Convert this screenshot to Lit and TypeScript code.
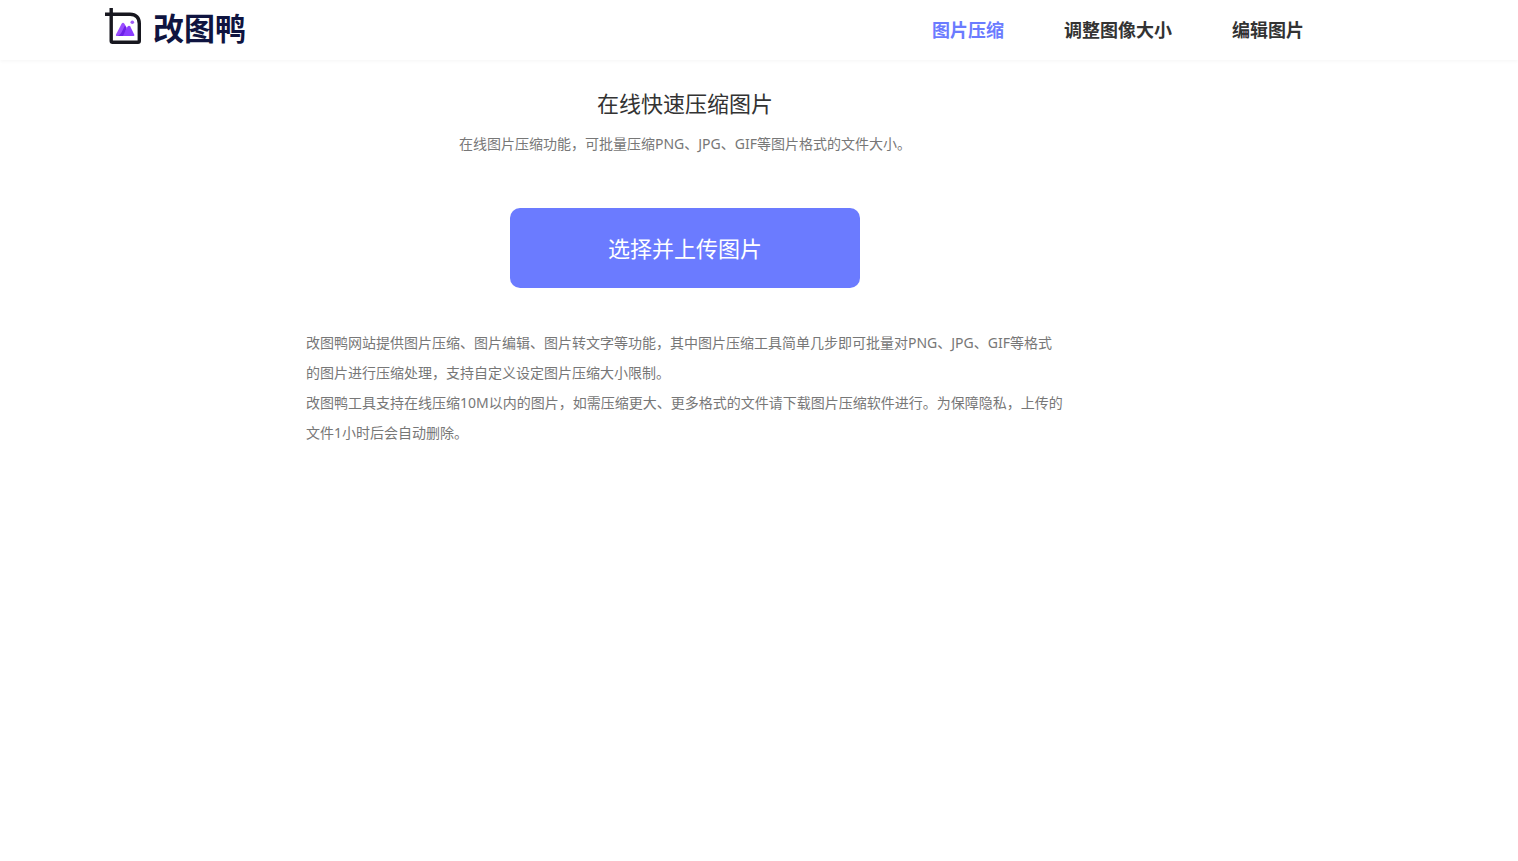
import { LitElement, html, css, svg } from "lit";
import { customElement, property } from "lit/decorators.js";

const NAV_ITEMS = ["图片压缩", "调整图像大小", "编辑图片"];

const logoMark = svg`
  <path d="M0 6.2H25C31 6.2 34.3 9.8 34.3 15.5V33Q34.3 34.3 33 34.3H7.6Q6.2 34.3 6.2 33V0" fill="none" stroke="#17171f" stroke-width="3.4"/>
  <path d="M11.6 28Q10.4 28 11 26.4L16.6 15.8Q18 13.6 19.4 15.8L21.6 19.6L19 28Z" fill="#9a4dff"/>
  <path d="M17 28L22.7 18.6Q24 17 25.3 18.6L29.2 26.4Q29.8 28 28.4 28Z" fill="#8b3dff"/>
  <path d="M12.4 28Q15.8 27 17.6 22.2L20 17.6L21.6 20.2L18 28Z" fill="#6d22e8"/>
  <circle cx="27.3" cy="14.2" r="1.8" fill="#a05cf5"/>`;

@customElement("site-header")
export class SiteHeader extends LitElement {
  @property() active = NAV_ITEMS[0];

  static styles = css`
    :host {
      display: block;
      box-shadow: 0 1px 4px #f5f5f5;
    }
    .bar {
      display: flex;
      align-items: center;
      justify-content: space-between;
      height: 60px;
      padding: 0 214px 0 105px;
    }
    .logo {
      display: flex;
      gap: 12px;
      color: #0f1440;
      text-decoration: none;
      font-size: 31px;
      font-weight: 700;
      line-height: 40px;
      padding-bottom: 4px;
    }
    .mark {
      width: 36px;
      height: 36px;
    }
    .nav {
      display: flex;
      gap: 60px;
    }
    .link {
      color: #333;
      text-decoration: none;
      font-size: 18px;
      font-weight: 700;
      line-height: 28px;
    }
    .link.active {
      color: #6b7bff;
    }
  `;

  render() {
    return html`
      <header class="bar">
        <a class="logo" href="#">
          <svg class="mark" viewBox="0 0 36 36" aria-hidden="true">${logoMark}</svg>
          <span>改图鸭</span>
        </a>
        <nav class="nav">
          ${NAV_ITEMS.map(
            (item) => html`<a class="link ${item === this.active ? "active" : ""}" href="#">${item}</a>`
          )}
        </nav>
      </header>
    `;
  }
}

@customElement("app-root")
export class AppRoot extends LitElement {
  static styles = css`
    :host {
      display: block;
      background: #fff;
      font-family: "Noto Sans", "Noto Sans CJK SC", sans-serif;
    }
    .main {
      display: flex;
      flex-direction: column;
      align-items: center;
      padding: 27px 148px 0 0;
      color: #777;
      font-size: 14px;
    }
    .title {
      margin: 0;
      color: #333;
      font-size: 22px;
      font-weight: 400;
      line-height: 32px;
    }
    .subtitle {
      margin: 10px 0 0;
      line-height: 30px;
    }
    .upload {
      width: 350px;
      height: 80px;
      margin: 49px 0 40px;
      padding: 0 0 2px;
      border: 0;
      border-radius: 10px;
      background: #6b7bff;
      color: #fff;
      font-family: inherit;
      font-size: 22px;
      cursor: pointer;
    }
    .intro {
      width: 100%;
      max-width: 758px;
      line-height: 30px;
    }
    .intro p {
      margin: 0;
    }
  `;

  render() {
    return html`
      <site-header></site-header>
      <main class="main">
        <h1 class="title">在线快速压缩图片</h1>
        <p class="subtitle">在线图片压缩功能，可批量压缩PNG、JPG、GIF等图片格式的文件大小。</p>
        <button class="upload" type="button">选择并上传图片</button>
        <div class="intro">
          <p>改图鸭网站提供图片压缩、图片编辑、图片转文字等功能，其中图片压缩工具简单几步即可批量对PNG、JPG、GIF等格式的图片进行压缩处理，支持自定义设定图片压缩大小限制。</p>
          <p>改图鸭工具支持在线压缩10M以内的图片，如需压缩更大、更多格式的文件请下载图片压缩软件进行。为保障隐私，上传的文件1小时后会自动删除。</p>
        </div>
      </main>
    `;
  }
}
